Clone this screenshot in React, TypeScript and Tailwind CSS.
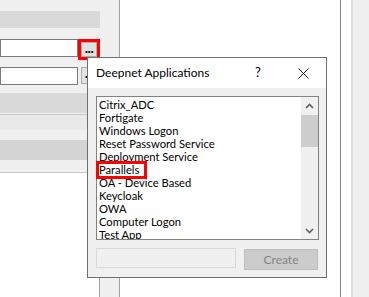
const apps = [
  'Citrix_ADC',
  'Fortigate',
  'Windows Logon',
  'Reset Password Service',
  'Deployment Service',
  'Parallels',
  'OA - Device Based',
  'Keycloak',
  'OWA',
  'Computer Logon',
  'Test App',
];

function Chevron({ down }: { down?: boolean }) {
  return (
    <svg width="9" height="6" viewBox="0 0 9 6" className={down ? 'rotate-180' : ''}>
      <path d="M1 5 L4.5 1.5 L8 5" fill="none" stroke="#606060" strokeWidth="1.6" />
    </svg>
  );
}

export default function App() {
  return (
    <div className="relative flex h-[297px] w-[369px] overflow-hidden bg-white font-['Lato',sans-serif] text-[12px] text-black">
      {/* form behind the dialog */}
      <div className="flex w-[120px] shrink-0 flex-col border-r border-[#a0a0a0]">
        <div className="flex h-[172px] flex-col bg-[#f0f0f0] pt-[11px]">
          <div className="h-[17px] w-[100px] bg-[#d9d9d9]" />
          <div className="mt-[11px] flex items-start">
            <div className="h-[18px] w-[78px] border border-[#7a7a7a] bg-white" />
            <div className="h-[21px] w-[22px] border-[3px] border-[#ff0000]">
              <div className="flex h-full items-center justify-center border border-[#adadad] bg-[#e1e1e1] pb-[4px] text-[14px] font-bold leading-none tracking-[-0.5px]">
                ...
              </div>
            </div>
          </div>
          <div className="mt-[7px] flex items-start">
            <div className="h-[18px] w-[78px] border border-[#7a7a7a] bg-white" />
            <div className="ml-[3px] flex h-[17px] w-[16px] items-end justify-center border border-[#adadad] bg-[#e1e1e1] pb-[3px] text-[14px] font-bold leading-none tracking-[-0.5px]">
              ...
            </div>
          </div>
          <div className="mt-[8px] h-[20px] bg-[#d9d9d9]" />
          <div className="mt-[1px] h-[16px] border-t border-[#c8c8c8] bg-[#e8e8e8]" />
          <div className="mt-[10px] h-[20px] bg-[#d4d4d4]" />
        </div>
        <div className="flex flex-1 justify-end border-t border-[#c8c8c8]">
          <div className="w-[20px] border-l border-[#a0a0a0] bg-[#f0f0f0]" />
        </div>
      </div>
      <div className="w-[221px] shrink-0 border-r border-[#868686]" />
      <div className="w-[10px] shrink-0" />
      <div className="w-[2px] shrink-0 bg-[#dedede]" />
      <div className="flex-1 bg-[#f0f0f0]" />

      {/* Deepnet Applications dialog */}
      <div className="absolute left-[87px] top-[57px] flex h-[221px] w-[240px] flex-col border border-[#707070] bg-[#f0f0f0]">
        <div className="flex h-[30px] items-center bg-white pl-[8px]">
          <span className="flex-1">Deepnet Applications</span>
          <span className="w-[12px] text-center text-[13px]">?</span>
          <span className="ml-[33px] mr-[17px] flex h-[12px] w-[12px] items-center justify-center">
            <svg width="11" height="11" viewBox="0 0 11 11">
              <path d="M0.5 0.5 L10.5 10.5 M10.5 0.5 L0.5 10.5" stroke="#1a1a1a" strokeWidth="1" />
            </svg>
          </span>
        </div>
        <div className="flex flex-1 flex-col px-[8px] pr-[7px] pt-[8px]">
          <div className="relative flex h-[144px] border border-[#828282] bg-white">
            <div className="flex-1 overflow-hidden pl-[2px] pt-[1px] text-[11.2px]">
              {apps.map((a) => (
                <div key={a} className="h-[13px] whitespace-nowrap leading-[13px]">
                  {a}
                </div>
              ))}
            </div>
            <div className="flex w-[17px] flex-col bg-[#f0f0f0]">
              <div className="flex h-[17px] items-center justify-center">
                <Chevron />
              </div>
              <div className="mt-[1px] h-[32px] bg-[#cdcdcd]" />
              <div className="flex-1" />
              <div className="flex h-[17px] items-center justify-center">
                <Chevron down />
              </div>
            </div>
            <div className="absolute left-[-1px] top-[64px] h-[18px] w-[51px] border-[3px] border-[#ff0000]" />
          </div>
          <div className="mt-[8px] flex items-start">
            <div className="h-[20px] w-[140px] border border-[#d9d9d9] bg-[#f0f0f0]" />
            <div className="ml-[8px] mt-[1px] flex h-[21px] w-[74px] items-center justify-center border border-[#bfbfbf] bg-[#cccccc] text-[#838383]">
              Create
            </div>
          </div>
        </div>
      </div>
    </div>
  );
}
